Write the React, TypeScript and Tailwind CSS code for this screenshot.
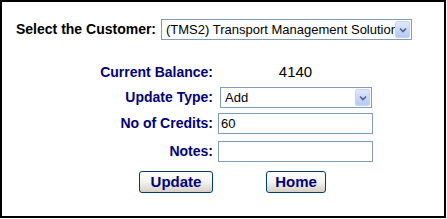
import React from "react";

const font = { fontFamily: '"Liberation Sans", Arial, sans-serif' };

function Arrow() {
  return (
    <div className="flex h-[17px] w-[15px] shrink-0 items-center justify-center rounded-[2px] border border-[#c3d3fd] bg-gradient-to-b from-[#dfe8fe] to-[#b4c8f6]">
      <svg width="8" height="6" viewBox="0 0 8 6">
        <path d="M1 1.5 L4 4.5 L7 1.5" stroke="#4d6185" strokeWidth="1.6" fill="none" />
      </svg>
    </div>
  );
}

function FakeSelect({ text, width }: { text: string; width: string }) {
  return (
    <div className={`flex h-[21px] ${width} items-center border border-[#7f9db9] bg-white pl-[4px] pr-[1px]`}>
      <div className="flex-1 overflow-hidden whitespace-nowrap text-[13px] leading-[19px] text-black">{text}</div>
      <Arrow />
    </div>
  );
}

function Btn({ children, w }: { children: React.ReactNode; w: string }) {
  return (
    <button
      className={`h-[22px] ${w} rounded-[3px] border border-[#003c74] bg-gradient-to-b from-white via-[#f4f3ee] to-[#d6d0c5] text-[15px] font-bold leading-none text-[#000080]`}
    >
      {children}
    </button>
  );
}

export default function App() {
  return (
    <div style={font} className="h-[219px] w-[447px] bg-white">
      <div className="h-[218px] w-[446px] border-2 border-black bg-white">
        <div className="flex items-center pl-[14px] pt-[17px]">
          <span className="w-[145px] text-[14px] font-bold text-black">Select the Customer:</span>
          <FakeSelect text="(TMS2) Transport Management Solutions" width="w-[251px]" />
        </div>

        <div className="mt-[22px] flex h-[21px] items-center">
          <span className="w-[211px] text-right text-[14px] font-bold text-[#000080]">Current Balance:</span>
          <span className="ml-[5px] w-[155px] text-center text-[15px] text-black">4140</span>
        </div>

        <div className="mt-[4px] flex items-center">
          <span className="w-[211px] text-right text-[14px] font-bold text-[#000080]">Update Type:</span>
          <div className="ml-[7px]">
            <FakeSelect text="Add" width="w-[152px]" />
          </div>
        </div>

        <div className="mt-[5px] flex items-center">
          <span className="w-[211px] text-right text-[14px] font-bold text-[#000080]">No of Credits:</span>
          <div className="ml-[5px] flex h-[21px] w-[155px] items-center border border-[#7f9db9] bg-white pl-[2px] text-[13px] text-black">
            60
          </div>
        </div>

        <div className="mt-[7px] flex items-center">
          <span className="w-[211px] text-right text-[14px] font-bold text-[#000080]">Notes:</span>
          <div className="ml-[5px] h-[21px] w-[155px] border border-[#7f9db9] bg-white" />
        </div>

        <div className="mt-[8px] flex items-center">
          <div className="ml-[137px]">
            <Btn w="w-[74px]">Update</Btn>
          </div>
          <div className="ml-[53px]">
            <Btn w="w-[60px]">Home</Btn>
          </div>
        </div>
      </div>
    </div>
  );
}
